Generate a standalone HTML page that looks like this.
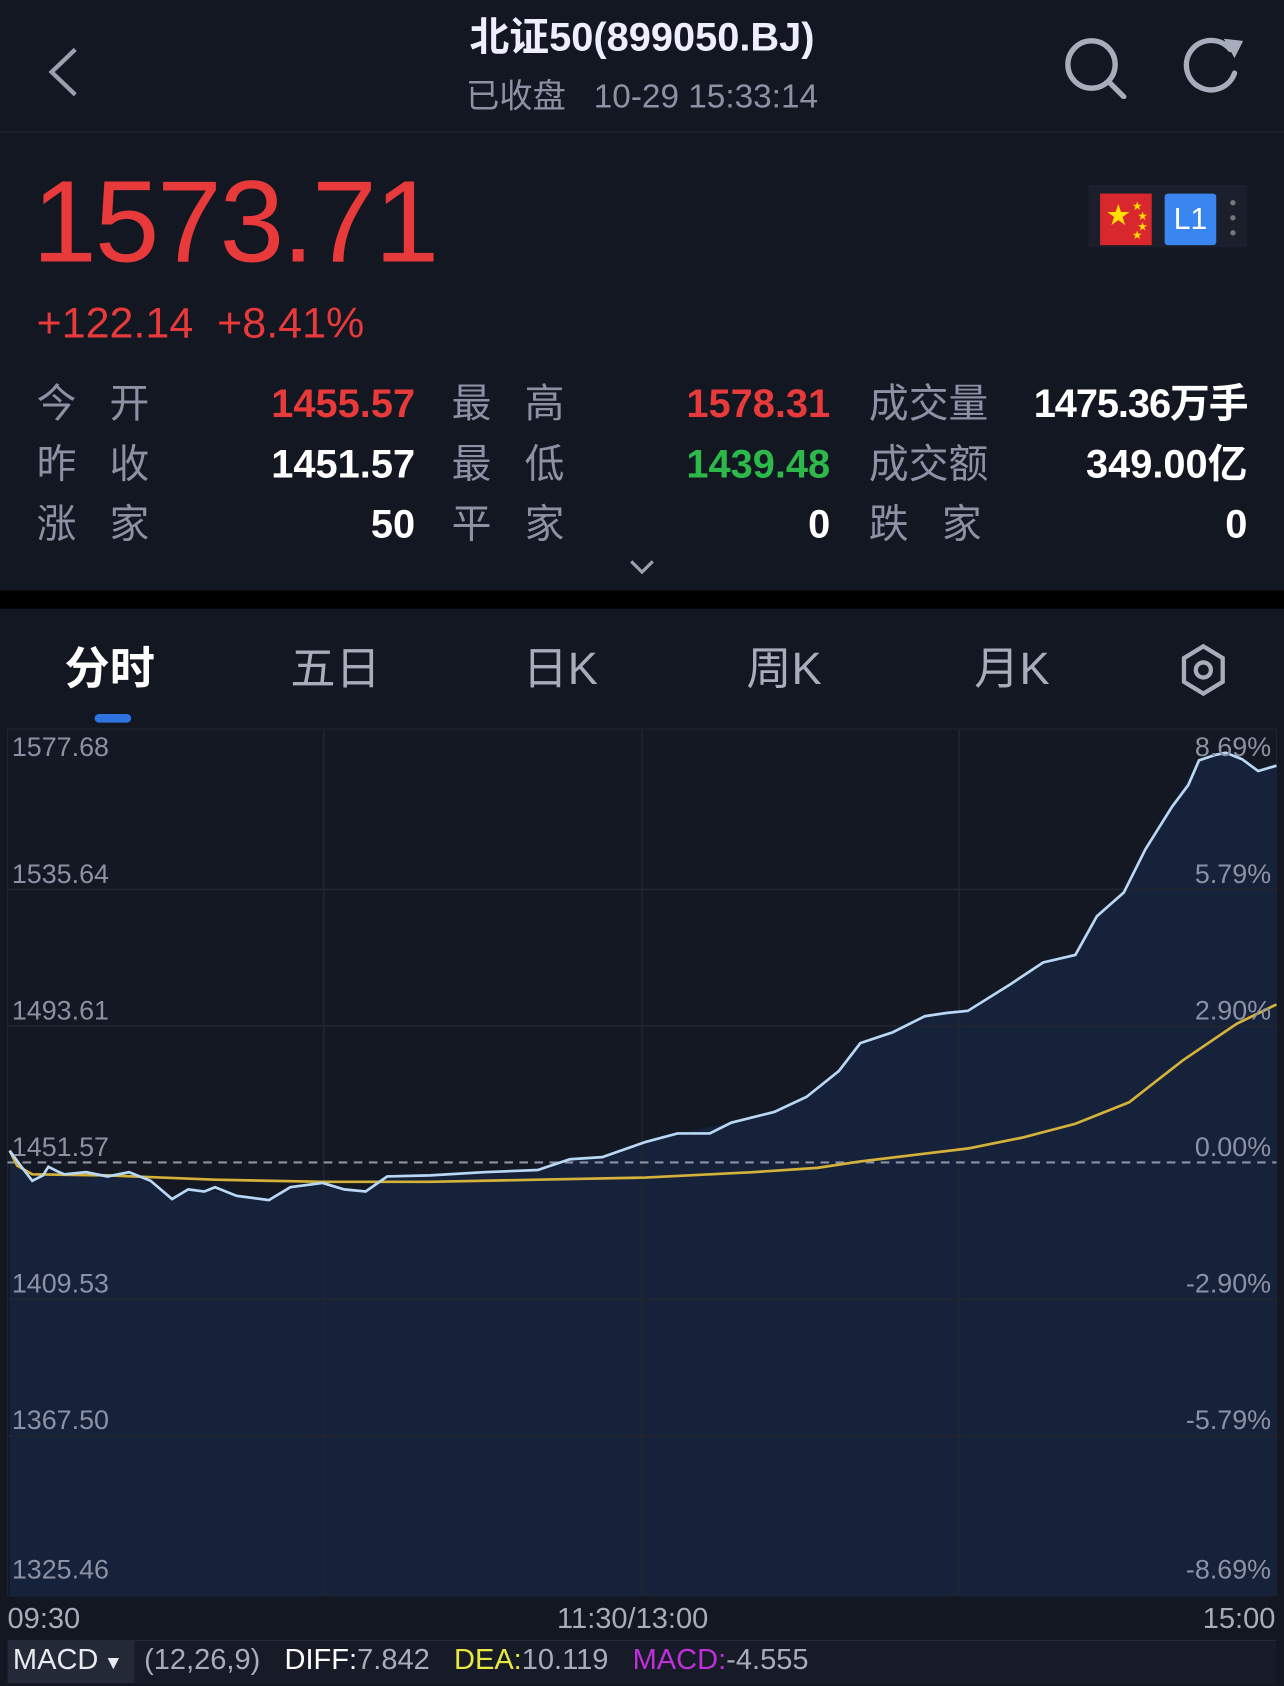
<!DOCTYPE html>
<html><head><meta charset="utf-8"><style>
html,body{margin:0;padding:0;background:#131722;width:1284px;height:1686px;overflow:hidden}
#w{position:absolute;left:0;top:0;width:1194px;height:1568px;transform:scale(1.07538);transform-origin:0 0;background:#131722;font-family:"Liberation Sans","Noto Sans CJK SC",sans-serif;color:#fff}
.a{position:absolute;white-space:nowrap}
.g{color:#8c92a3}
.r{color:#e8393b}
.lab{font-size:37px;color:#8c92a3;line-height:44px}
.val{font-size:37px;text-align:right;font-weight:bold;line-height:44px}
</style></head><body><div id="w">
<svg class="a" style="left:40px;top:42px" width="36" height="50"><path d="M30 4 L8 25 L30 46" stroke="#9aa0b0" stroke-width="4" fill="none"/></svg>
<div class="a" style="left:0;width:1194px;top:12px;text-align:center;font-size:37px;font-weight:bold;color:#eef;line-height:46px">北证50(899050.BJ)</div>
<div class="a" style="left:0;width:1194px;top:70px;text-align:center;font-size:31px;color:#8c92a3;line-height:40px">已收盘&nbsp;&nbsp;&nbsp;10-29 15:33:14</div>
<svg class="a" style="left:985px;top:32px" width="70" height="60"><circle cx="30" cy="28" r="22" stroke="#a8adbb" stroke-width="5" fill="none"/><path d="M46 44 L60 58" stroke="#a8adbb" stroke-width="5" stroke-linecap="round"/></svg>
<svg class="a" style="left:1098px;top:30px" width="64" height="60"><path d="M50 38 A23 23 0 1 1 46 16" stroke="#a8adbb" stroke-width="5" fill="none" stroke-linecap="round"/><path d="M40 6 L58 8 L50 24 Z" fill="#a8adbb"/></svg>
<div class="a" style="left:0;top:122px;width:1194px;height:1px;background:#1e2330"></div>
<div class="a r" style="left:30px;top:146px;font-size:108px;letter-spacing:-2px;line-height:120px">1573.71</div>
<div class="a r" style="left:34px;top:278px;font-size:40px;line-height:46px">+122.14&nbsp;&nbsp;+8.41%</div>
<div class="a" style="left:1012px;top:172px;width:148px;height:58px;background:#1a1f2b"></div>
<div class="a" style="left:1023px;top:180px;width:48px;height:48px;background:#d9272e"><svg width="48" height="48"><text x="6" y="28" font-size="22" fill="#ffde00">★</text><text x="30" y="15" font-size="9" fill="#ffde00">★</text><text x="35" y="24" font-size="9" fill="#ffde00">★</text><text x="35" y="34" font-size="9" fill="#ffde00">★</text><text x="30" y="42" font-size="9" fill="#ffde00">★</text></svg></div>
<div class="a" style="left:1083px;top:180px;width:48px;height:48px;background:#3a86f0;border-radius:3px;font-size:28px;line-height:48px;text-align:center">L1</div>
<div class="a" style="left:1144px;top:186px;width:5px;height:5px;border-radius:3px;background:#777"></div>
<div class="a" style="left:1144px;top:200px;width:5px;height:5px;border-radius:3px;background:#777"></div>
<div class="a" style="left:1144px;top:214px;width:5px;height:5px;border-radius:3px;background:#777"></div>

<div class="a lab" style="left:34px;top:354px">今&nbsp;&nbsp;&nbsp;开</div>
<div class="a val r" style="left:200px;width:186px;top:354px">1455.57</div>
<div class="a lab" style="left:420px;top:354px">最&nbsp;&nbsp;&nbsp;高</div>
<div class="a val r" style="left:580px;width:192px;top:354px">1578.31</div>
<div class="a lab" style="left:808px;top:354px">成交量</div>
<div class="a val" style="left:920px;width:240px;top:354px;letter-spacing:-1px">1475.36万手</div>

<div class="a lab" style="left:34px;top:410px">昨&nbsp;&nbsp;&nbsp;收</div>
<div class="a val" style="left:200px;width:186px;top:410px">1451.57</div>
<div class="a lab" style="left:420px;top:410px">最&nbsp;&nbsp;&nbsp;低</div>
<div class="a val" style="left:580px;width:192px;top:410px;color:#2db84a">1439.48</div>
<div class="a lab" style="left:808px;top:410px">成交额</div>
<div class="a val" style="left:920px;width:240px;top:410px">349.00亿</div>

<div class="a lab" style="left:34px;top:466px">涨&nbsp;&nbsp;&nbsp;家</div>
<div class="a val" style="left:200px;width:186px;top:466px">50</div>
<div class="a lab" style="left:420px;top:466px">平&nbsp;&nbsp;&nbsp;家</div>
<div class="a val" style="left:580px;width:192px;top:466px">0</div>
<div class="a lab" style="left:808px;top:466px">跌&nbsp;&nbsp;&nbsp;家</div>
<div class="a val" style="left:920px;width:240px;top:466px">0</div>
<svg class="a" style="left:584px;top:518px" width="26" height="18"><path d="M3 4 L13 14 L23 4" stroke="#9aa0b0" stroke-width="3" fill="none"/></svg>

<div class="a" style="left:0;top:549px;width:1194px;height:17px;background:#000"></div>
<div class="a" style="left:60px;top:596px;font-size:42px;font-weight:bold;line-height:52px">分时</div>
<div class="a" style="left:88px;top:664px;width:34px;height:8px;border-radius:4px;background:#2d74e0"></div>
<div class="a g" style="left:270px;top:596px;font-size:42px;color:#a8adbb;line-height:52px">五日</div>
<div class="a g" style="left:486px;top:596px;font-size:42px;color:#a8adbb;line-height:52px">日K</div>
<div class="a g" style="left:694px;top:596px;font-size:42px;color:#a8adbb;line-height:52px">周K</div>
<div class="a g" style="left:906px;top:596px;font-size:42px;color:#a8adbb;line-height:52px">月K</div>
<svg class="a" style="left:1096px;top:598px" width="46" height="50"><path d="M23 3 L41 14 L41 36 L23 47 L5 36 L5 14 Z" stroke="#a8adbb" stroke-width="4" fill="none"/><circle cx="23" cy="25" r="7" stroke="#a8adbb" stroke-width="4" fill="none"/></svg>

<svg class="a" style="left:0;top:0" width="1194" height="1568">
<rect x="7" y="678" width="1180" height="806" fill="#141823" stroke="#20252f"/>
<path d="M9 1070 L20 1085 L30 1098 L40 1093 L50 1089 L60 1092 L80 1090 L100 1094 L120 1090 L140 1098 L160 1115 L180 1104 L200 1108 L220 1112 L250 1116 L270 1104 L300 1100 L320 1106 L340 1108 L360 1094 L400 1093 L450 1090 L500 1088 L530 1078 L560 1076 L600 1062 L640 1052 L680 1044 L720 1034 L750 1020 L780 996 L800 970 L830 960 L860 945 L880 942 L900 940 L940 915 L970 895 L1000 888 L1020 852 L1045 830 L1065 790 L1090 750 L1115 707 L1140 700 L1170 717 L1187 712 L1187 1484 L9 1484 Z" fill="#16213a"/>
<g stroke="#20252f" stroke-width="1.5">
<line x1="301" y1="678" x2="301" y2="1484"/><line x1="597" y1="678" x2="597" y2="1484"/><line x1="892" y1="678" x2="892" y2="1484"/>
<line x1="7" y1="827" x2="1187" y2="827"/><line x1="7" y1="954" x2="1187" y2="954"/><line x1="7" y1="1208" x2="1187" y2="1208"/><line x1="7" y1="1335" x2="1187" y2="1335"/>
</g>
<line x1="7" y1="1081" x2="1187" y2="1081" stroke="#8c92a3" stroke-width="2" stroke-dasharray="8 6"/>
<polyline fill="none" stroke="#d4b23a" stroke-width="2.5" points="9,1070 16,1084 30,1092 100,1093 200,1097 300,1099 400,1099 500,1097 600,1095 700,1090 760,1086 800,1080 850,1074 900,1068 950,1058 1000,1045 1050,1025 1100,986 1150,952 1187,934"/>
<polyline fill="none" stroke="#b8d8f5" stroke-width="2.5" points="9,1070 20,1085 30,1098 40,1093 45,1085 55,1090 60,1092 80,1090 100,1094 120,1090 140,1098 160,1115 175,1106 190,1108 200,1104 220,1112 250,1116 270,1104 300,1100 320,1106 340,1108 360,1094 400,1093 450,1090 500,1088 530,1078 560,1076 600,1062 630,1054 660,1054 680,1044 720,1034 750,1020 780,996 800,970 830,960 860,945 880,942 900,940 940,915 970,895 1000,888 1010,870 1020,852 1045,830 1065,790 1090,750 1105,730 1115,707 1130,702 1140,700 1155,706 1170,717 1187,712"/>
</svg>
<div class="a g" style="left:11px;top:681px;font-size:25px">1577.68</div>
<div class="a g" style="left:11px;top:799px;font-size:25px">1535.64</div>
<div class="a g" style="left:11px;top:926px;font-size:25px">1493.61</div>
<div class="a g" style="left:11px;top:1053px;font-size:25px">1451.57</div>
<div class="a g" style="left:11px;top:1180px;font-size:25px">1409.53</div>
<div class="a g" style="left:11px;top:1307px;font-size:25px">1367.50</div>
<div class="a g" style="left:11px;top:1446px;font-size:25px">1325.46</div>
<div class="a g" style="right:12px;top:681px;font-size:25px">8.69%</div>
<div class="a g" style="right:12px;top:799px;font-size:25px">5.79%</div>
<div class="a g" style="right:12px;top:926px;font-size:25px">2.90%</div>
<div class="a g" style="right:12px;top:1053px;font-size:25px">0.00%</div>
<div class="a g" style="right:12px;top:1180px;font-size:25px">-2.90%</div>
<div class="a g" style="right:12px;top:1307px;font-size:25px">-5.79%</div>
<div class="a g" style="right:12px;top:1446px;font-size:25px">-8.69%</div>
<div class="a" style="left:7px;top:1490px;font-size:27px;color:#a8adbb">09:30</div>
<div class="a" style="left:518px;top:1490px;font-size:27px;color:#a8adbb">11:30/13:00</div>
<div class="a" style="right:8px;top:1490px;font-size:27px;color:#a8adbb">15:00</div>
<div class="a" style="left:7px;top:1525px;width:1180px;height:40px;background:#161b27;border-top:1px solid #242a37"></div>
<div class="a" style="left:7px;top:1525px;width:118px;height:40px;background:#232937"></div>
<div class="a" style="left:12px;top:1528px;font-size:27px;color:#e8eaf0">MACD<span style="font-size:18px"> ▼</span></div>
<div class="a" style="left:134px;top:1528px;font-size:27px;color:#a8adbb">(12,26,9)&nbsp;&nbsp;&nbsp;<span style="color:#fff">DIFF:</span>7.842&nbsp;&nbsp;&nbsp;<span style="color:#e8e840">DEA:</span>10.119&nbsp;&nbsp;&nbsp;<span style="color:#c030d8">MACD:</span>-4.555</div>
</div></body></html>
